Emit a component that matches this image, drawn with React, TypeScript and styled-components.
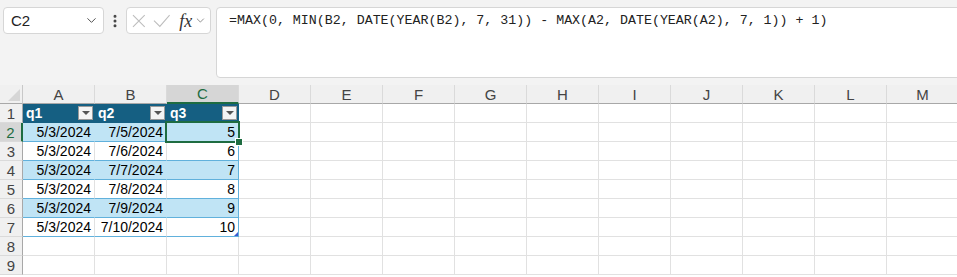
import React from 'react';
import styled, { createGlobalStyle } from 'styled-components';
import { ChevronDown, EllipsisVertical } from 'lucide-react';

const GlobalStyle = createGlobalStyle`
body {
  margin: 0;
  background: #fff;
  font-family: "Liberation Sans", Arial, sans-serif;
}
`;

const formula = '=MAX(0, MIN(B2, DATE(YEAR(B2), 7, 31)) - MAX(A2, DATE(YEAR(A2), 7, 1)) + 1)';
const columns = ['A', 'B', 'C', 'D', 'E', 'F', 'G', 'H', 'I', 'J', 'K', 'L', 'M'];
const headers = ['q1', 'q2', 'q3'];
const rows = [
    ['5/3/2024', '7/5/2024', '5'],
    ['5/3/2024', '7/6/2024', '6'],
    ['5/3/2024', '7/7/2024', '7'],
    ['5/3/2024', '7/8/2024', '8'],
    ['5/3/2024', '7/9/2024', '9'],
    ['5/3/2024', '7/10/2024', '10'],
];
const TOTAL_ROWS = 9;

const CancelIcon = () => (
    <svg width="14" height="14" viewBox="0 0 14 14">
        <path d="M1 1 L13 13 M13 1 L1 13" stroke="#bdbdbd" strokeWidth="1.1" fill="none" />
    </svg>
);

const EnterIcon = () => (
    <svg width="18" height="14" viewBox="0 0 18 14">
        <path d="M1 6.5 L7 12.5 L17 1" stroke="#bdbdbd" strokeWidth="1.1" fill="none" />
    </svg>
);

const App = () => {
    const renderRow = (r: number) => {
        const cells = [];
        for (let c = 0; c < columns.length; c++) {
            const inTable = c < 3 && r <= 7;
            if (r === 1 && inTable) {
                cells.push(
                    <HeaderCell key={c}>
                        <span>{headers[c]}</span>
                        <FilterButton><FilterArrow /></FilterButton>
                    </HeaderCell>
                );
                continue;
            }
            const data = inTable ? rows[r - 2][c] : '';
            cells.push(
                <Cell
                    key={c}
                    $table={inTable}
                    $band={inTable && r % 2 === 0}
                    $lastCol={inTable && c === 2}
                    $selected={r === 2 && c === 2}
                >
                    {data}
                    {r === 7 && c === 2 && <ResizeHandle />}
                </Cell>
            );
        }
        return cells;
    };

    return (
        <>
            <GlobalStyle />
            <TopBar>
                <NameBox>
                    <span>C2</span>
                    <ChevronDown size={15} strokeWidth={1.5} color="#444" />
                </NameBox>
                <Dots>
                    <EllipsisVertical size={16} strokeWidth={2.5} color="#444" />
                </Dots>
                <FnBox>
                    <CancelIcon />
                    <EnterIcon />
                    <FxLabel>fx</FxLabel>
                    <ChevronDown size={13} strokeWidth={1.5} color="#777" />
                </FnBox>
                <FormulaBox>{formula}</FormulaBox>
            </TopBar>
            <Sheet>
                <Corner><CornerTriangle /></Corner>
                {columns.map((col) => (
                    <ColHead key={col} $active={col === 'C'}>{col}</ColHead>
                ))}
                {Array.from({ length: TOTAL_ROWS }, (_, i) => i + 1).map((r) => (
                    <React.Fragment key={r}>
                        <RowHead $active={r === 2}>{r}</RowHead>
                        {renderRow(r)}
                    </React.Fragment>
                ))}
            </Sheet>
        </>
    );
};

const TopBar = styled.div`
display: flex;
align-items: flex-start;
height: 85px;
box-sizing: border-box;
padding: 7px 0 0 3px;
background: #f3f3f3;
overflow: hidden;
`;

const NameBox = styled.div`
display: flex;
align-items: center;
justify-content: space-between;
box-sizing: border-box;
width: 101px;
height: 27px;
padding: 0 4px 0 7px;
background: #fff;
border: 1px solid #d6d6d6;
border-radius: 4px;
font-size: 15px;
color: #222;
`;

const Dots = styled.div`
display: flex;
align-items: center;
justify-content: center;
width: 22px;
height: 27px;
`;

const FnBox = styled.div`
display: flex;
align-items: center;
box-sizing: border-box;
width: 85px;
height: 27px;
padding: 0 3px 0 5px;
gap: 7px;
background: #fff;
border: 1px solid #d6d6d6;
border-radius: 4px;
`;

const FxLabel = styled.span`
font-family: "Liberation Serif", "Times New Roman", serif;
font-style: italic;
font-size: 18px;
color: #333;
margin-left: 2px;
margin-right: -5px;
line-height: 1;
`;

const FormulaBox = styled.div`
flex: 1;
box-sizing: border-box;
height: 71px;
margin-left: 5px;
margin-right: -10px;
padding: 4px 12px;
background: #fff;
border: 1px solid #d6d6d6;
border-radius: 4px;
font-family: "Liberation Mono", "Courier New", monospace;
font-size: 13.3px;
line-height: 18px;
color: #222;
white-space: nowrap;
`;

const Sheet = styled.div`
display: grid;
grid-template-columns: 23px repeat(13, 72px);
grid-auto-rows: 19px;
width: 957px;
overflow: hidden;
`;

const Corner = styled.div`
position: relative;
background: #f0f0f0;
border-right: 1px solid #c8c8c8;
border-bottom: 1px solid #a8a8a8;
`;

const CornerTriangle = styled.div`
position: absolute;
right: 2px;
bottom: 2px;
width: 0;
height: 0;
border-left: 12px solid transparent;
border-bottom: 12px solid #d6d6d6;
`;

const ColHead = styled.div<{ $active?: boolean }>`
display: flex;
align-items: center;
justify-content: center;
background: ${(p) => (p.$active ? '#d6d6d6' : '#f0f0f0')};
color: ${(p) => (p.$active ? '#1e6c41' : '#444')};
font-size: 15px;
border-right: 1px solid #dadada;
border-bottom: ${(p) => (p.$active ? '2px solid #1e6c41' : '1px solid #a8a8a8')};
`;

const RowHead = styled.div<{ $active?: boolean }>`
display: flex;
align-items: center;
justify-content: center;
background: ${(p) => (p.$active ? '#d6d6d6' : '#f0f0f0')};
color: ${(p) => (p.$active ? '#1e6c41' : '#444')};
font-size: 15px;
border-right: ${(p) => (p.$active ? '2px solid #1e6c41' : '1px solid #a8a8a8')};
border-bottom: 1px solid #dadada;
`;

const HeaderCell = styled.div`
display: flex;
align-items: center;
justify-content: space-between;
box-sizing: border-box;
padding: 0 2px 0 3px;
background: #155f82;
color: #fff;
font-size: 14px;
font-weight: bold;
border-bottom: 1px solid #155f82;
`;

const FilterButton = styled.div`
display: flex;
align-items: center;
justify-content: center;
box-sizing: border-box;
width: 15px;
height: 14px;
background: #f4f4f4;
border: 1px solid #9a9a9a;
`;

const FilterArrow = styled.div`
width: 0;
height: 0;
border-left: 4px solid transparent;
border-right: 4px solid transparent;
border-top: 4px solid #555;
`;

const Cell = styled.div<{ $table?: boolean; $band?: boolean; $lastCol?: boolean; $selected?: boolean }>`
position: relative;
display: flex;
align-items: center;
justify-content: flex-end;
box-sizing: border-box;
padding-right: 3px;
font-size: 14px;
color: #000;
background: ${(p) => (p.$band ? '#c0e4f5' : '#fff')};
border-right: 1px solid ${(p) => (p.$lastCol ? '#61b1dc' : p.$band ? '#c0e4f5' : '#e1e1e1')};
border-bottom: 1px solid ${(p) => (p.$table ? '#61b1dc' : '#e1e1e1')};
${(p) => p.$selected && `
  z-index: 2;
  &::before {
    content: '';
    position: absolute;
    top: -2px;
    left: -2px;
    right: -2px;
    bottom: -2px;
    border: 2px solid #1e6c41;
    pointer-events: none;
  }
  &::after {
    content: '';
    position: absolute;
    right: -5px;
    bottom: -5px;
    width: 6px;
    height: 6px;
    background: #1e6c41;
    border: 1px solid #fff;
  }
`}
`;

const ResizeHandle = styled.div`
position: absolute;
right: 0;
bottom: 0;
width: 0;
height: 0;
border-left: 4px solid transparent;
border-bottom: 4px solid #3a5ad0;
`;

export default App;
